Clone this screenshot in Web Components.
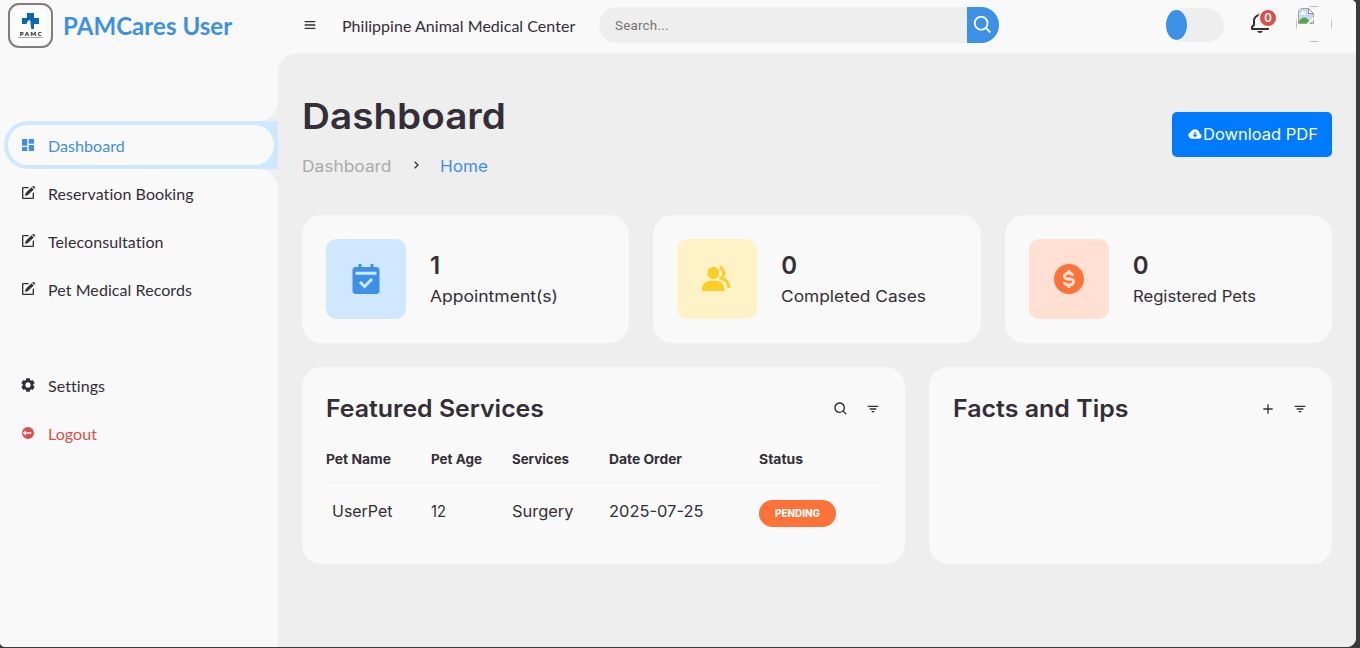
<!DOCTYPE html>
<html lang="en">
<head>
<meta charset="utf-8">
<title>PAMCares User</title>
<style>
:root{--light:#f9f9f9;--grey:#eee;--blue:#3c91e6;--light-blue:#cfe8ff;--dark:#342e37;--red:#db504a;--yellow:#ffce26;--light-yellow:#fff2c6;--orange:#fd7238;--light-orange:#ffe0d3;}
html,body{margin:0;height:100%;overflow:hidden;background:#3a3a3a;font-variant-ligatures:none;}
</style>
</head>
<body>
<pam-app></pam-app>
<script>
const ICONS={
dashboard:'<path d="M4 13h6a1 1 0 0 0 1-1V4a1 1 0 0 0-1-1H4a1 1 0 0 0-1 1v8a1 1 0 0 0 1 1zm-1 7a1 1 0 0 0 1 1h6a1 1 0 0 0 1-1v-4a1 1 0 0 0-1-1H4a1 1 0 0 0-1 1v4zm10 0a1 1 0 0 0 1 1h6a1 1 0 0 0 1-1v-7a1 1 0 0 0-1-1h-6a1 1 0 0 0-1 1v7zm1-10h6a1 1 0 0 0 1-1V4a1 1 0 0 0-1-1h-6a1 1 0 0 0-1 1v5a1 1 0 0 0 1 1z"/>',
edit:'<path d="m7.500 16.500 4-1L20.500 6.800 17.200 3.500 8.500 12zM18.300 2.500l3.200 3.200 1-1a1 1 0 0 0 0-1.400l-1.800-1.800a1 1 0 0 0-1.400 0z"/><path d="M5 21h14c1.103 0 2-.897 2-2v-8.668l-2 2V19H5V5h6.847l2-2H5c-1.103 0-2 .897-2 2v14c0 1.103.897 2 2 2z"/>',
cog:'<path d="m2.344 15.271 2 3.460a1 1 0 0 0 1.366.365l1.396-.806c.58.457 1.221.832 1.895 1.112V21a1 1 0 0 0 1 1h4a1 1 0 0 0 1-1v-1.598a8.094 8.094 0 0 0 1.895-1.112l1.396.806c.477.275 1.091.11 1.366-.365l2-3.460a1.004 1.004 0 0 0-.365-1.366l-1.372-.793a7.683 7.683 0 0 0-.002-2.224l1.372-.793c.476-.275.641-.89.365-1.366l-2-3.460a1 1 0 0 0-1.366-.365l-1.396.806A8.034 8.034 0 0 0 15 4.598V3a1 1 0 0 0-1-1h-4a1 1 0 0 0-1 1v1.598A8.094 8.094 0 0 0 7.105 5.710L5.710 4.904a.999.999 0 0 0-1.366.365l-2 3.460a1.004 1.004 0 0 0 .365 1.366l1.372.793a7.683 7.683 0 0 0 0 2.224l-1.372.793c-.476.275-.641.89-.365 1.366zM12 8c2.206 0 4 1.794 4 4s-1.794 4-4 4-4-1.794-4-4 1.794-4 4-4z"/>',
logout:'<path fill-rule="evenodd" d="M12 3a9 9 0 1 0 0 18 9 9 0 0 0 0-18zM9 8v3h8v2H9v3l-5-4z"/>',
menu:'<path d="M4 6h16v2H4zm0 5h16v2H4zm0 5h16v2H4z"/>',
search:'<path d="M10 18a7.952 7.952 0 0 0 4.897-1.688l4.396 4.396 1.414-1.414-4.396-4.396A7.952 7.952 0 0 0 18 10c0-4.411-3.589-8-8-8s-8 3.589-8 8 3.589 8 8 8zm0-14c3.309 0 6 2.691 6 6s-2.691 6-6 6-6-2.691-6-6 2.691-6 6-6z"/>',
filter:'<path d="M7 11h10v2H7zM4 7h16v2H4zm6 8h4v2h-4z"/>',
plus:'<path d="M19 11h-6V5h-2v6H5v2h6v6h2v-6h6z"/>',
chevron:'<path d="M10.707 17.707 16.414 12l-5.707-5.707-1.414 1.414L13.586 12l-4.293 4.293z"/>',
cloud:'<path d="M18.944 11.112C18.507 7.670 15.560 5 12 5 9.244 5 6.850 6.611 5.757 9.150 3.609 9.792 2 11.820 2 14c0 2.757 2.243 5 5 5h11c2.206 0 4-1.794 4-4a4.010 4.010 0 0 0-3.056-3.888zM12 17l-4-4h3V9h2v4h3z"/>',
bell:'<path d="M19 13.586V10c0-3.217-2.185-5.927-5.145-6.742C13.562 2.520 12.846 2 12 2s-1.562.52-1.855 1.258C7.185 4.074 5 6.783 5 10v3.586l-1.707 1.707A.996.996 0 0 0 3 16v2a1 1 0 0 0 1 1h16a1 1 0 0 0 1-1v-2a.996.996 0 0 0-.293-.707L19 13.586zM19 17H5v-.586l1.707-1.707A.996.996 0 0 0 7 14v-4c0-2.757 2.243-5 5-5s5 2.243 5 5v4c0 .266.105.52.293.707L19 16.414V17zm-7 5a2.980 2.980 0 0 0 2.818-2H9.182A2.980 2.980 0 0 0 12 22z"/>',
calendar:'<path fill-rule="evenodd" d="M21 20V6c0-1.103-.897-2-2-2h-2V2h-2v2H9V2H7v2H5c-1.103 0-2 .897-2 2v14c0 1.103.897 2 2 2h14c1.103 0 2-.897 2-2zM5 7.200h14v2H5zM11 18.400l-3.700-3.700 1.400-1.400 2.300 2.300 4.300-4.300 1.400 1.400z"/>',
group:'<path d="M9.500 12c2.206 0 4-1.794 4-4s-1.794-4-4-4-4 1.794-4 4 1.794 4 4 4zm1.500 1H8c-3.309 0-6 2.691-6 6v1h15v-1c0-3.309-2.691-6-6-6z"/><path d="M16.604 11.048a5.670 5.670 0 0 0 .751-3.440c-.179-1.784-1.175-3.361-2.803-4.440l-1.105 1.666c1.119.742 1.800 1.799 1.918 2.974a3.693 3.693 0 0 1-1.072 2.986l-1.192 1.192 1.618.475C18.951 13.701 19 17.957 19 18h2c0-1.789-.956-5.285-4.396-6.952z"/>',
dollar:'<path d="M12 2C6.486 2 2 6.486 2 12s4.486 10 10 10 10-4.486 10-10S17.514 2 12 2zm1 14.915V18h-2v-1.080c-2.339-.367-3-2.002-3-2.920h2c.011.143.159 1 2 1 1.380 0 2-.585 2-1 0-.324 0-1-2-1-3.480 0-4-1.880-4-3 0-1.288 1.029-2.584 3-2.915V6.012h2v1.109c1.734.41 2.400 1.853 2.400 2.879h-1l-1 .018C13.386 9.638 13.185 9 12 9c-1.299 0-2 .516-2 1 0 .374 0 1 2 1 3.480 0 4 1.880 4 3 0 1.288-1.029 2.584-3 2.915z"/>'
};
const define=(name,html,setup)=>customElements.define(name,class extends HTMLElement{
  constructor(){super();this.attachShadow({mode:'open'});}
  connectedCallback(){this.shadowRoot.innerHTML=typeof html==='function'?html(this):html;if(setup)setup(this);}
});

define('ui-icon',el=>`<style>:host{display:block;flex:none;width:${el.getAttribute('size')||16}px;height:${el.getAttribute('size')||16}px}svg{display:block;width:100%;height:100%;fill:currentColor}</style><svg viewBox="0 0 24 24">${ICONS[el.getAttribute('name')]}</svg>`);

/* Text widened so that it fills the given width */
define('ui-text',`<style>:host{display:block;flex:none;white-space:nowrap}span{display:inline-block;transform-origin:0 50%}</style><span><slot></slot></span>`,el=>{
  const w=+el.getAttribute('w');
  el.style.width=w+'px';
  const s=el.shadowRoot.querySelector('span');
  s.style.transform='scaleX('+(w/s.getBoundingClientRect().width).toFixed(4)+')';
});

define('nav-item',el=>`<style>
:host{display:block;position:relative;height:48px;padding:4px;margin-left:4px;box-sizing:border-box;border-radius:24px 0 0 24px;color:var(--dark)}
:host([active]){background:var(--light-blue);color:var(--blue)}
:host([danger]){color:var(--red)}
:host([active])::before,:host([active])::after{content:"";position:absolute;right:0;width:20px;height:20px}
:host([active])::before{top:-20px;background:radial-gradient(circle at 0 0,var(--light) 19.500px,var(--grey) 20.500px)}
:host([active])::after{bottom:-20px;background:radial-gradient(circle at 0 100%,var(--light) 19.500px,var(--grey) 20.500px)}
a{display:flex;align-items:center;height:40px;border-radius:20px;background:var(--light);padding-left:12px;gap:12px;font:16px/40px Lato,sans-serif}
span{padding-top:2px;letter-spacing:.07px}
</style><a><ui-icon name="${el.getAttribute('icon')}"></ui-icon><span><slot></slot></span></a>`);

define('pam-logo',`<style>:host{display:grid;place-items:center;box-sizing:border-box;width:45px;height:45px;border:2px solid #7e7e7e;border-radius:11px;flex:none}
div{width:31px;height:31px;background:#fff;border-radius:3px;display:flex;flex-direction:column;align-items:center}
svg{width:17px;height:17px;margin-top:3px;flex:none}b{font:900 6px/7px Lato,sans-serif;letter-spacing:1.500px;color:#111;padding-left:2px}i{width:25px;height:1px;background:#aaa}</style>
<div><svg viewBox="0 0 17 17"><path fill="#0a66b5" d="M5 0h7v5h5v6h-5v5H5v-5H0V5h5z"/><path fill="#fff" d="M4.500 11l1-2.500L7 7l1.500 1v3l.8 5H5z"/></svg><b>PAMC</b><i></i></div>`);

define('side-bar',`<style>:host{display:block;width:278px;flex:none;background:var(--light)}
header{display:flex;gap:10px;height:53px;box-sizing:border-box;padding:3px 0 0 8px}
h1{margin:0;font:700 24px/45px Lato,sans-serif;color:var(--blue);letter-spacing:.06px}
nav{padding-top:68px}nav+nav{padding-top:48px}</style>
<header><pam-logo></pam-logo><h1>PAMCares User</h1></header>
<nav><nav-item icon="dashboard" active>Dashboard</nav-item><nav-item icon="edit">Reservation Booking</nav-item><nav-item icon="edit">Teleconsultation</nav-item><nav-item icon="edit">Pet Medical Records</nav-item></nav>
<nav><nav-item icon="cog">Settings</nav-item><nav-item icon="logout" danger>Logout</nav-item></nav>`);

define('search-box',`<style>:host{display:flex;width:400px;height:36px;border-radius:18px;overflow:hidden;background:var(--grey)}
span{flex:1;padding-left:16px;font:13.333px/37px Roboto,sans-serif;color:#757575;letter-spacing:.25px}
button{width:32px;border:0;padding:0;background:var(--blue);color:#fff;display:grid;place-items:center}</style>
<span>Search...</span><button><ui-icon name="search" size="22"></ui-icon></button>`);

define('user-avatar',`<style>:host{display:block;position:relative;width:36px;height:36px}
div{height:36px;border-radius:50%;overflow:hidden}
i{display:block;box-sizing:border-box;height:36px;border:1px solid #b5b5b5}svg{position:absolute;left:2px;top:2px}</style>
<div><i></i></div><svg width="16" height="16" viewBox="0 0 16 16"><path d="M.5 15.500V3L3 .500h7.500l5 5v10z" fill="#c8dafa" stroke="#a3a3a3"/><path d="M10.500.500v5h5z" fill="#fff" stroke="#919191"/><path d="M3.500 4.500c0-2 3-2 3 0 2 0 2 2.500 0 2.500h-3C2 7 2 4.500 3.500 4.500z" fill="#fff"/><path d="M1 15v-1.500c3-5 7-5 10-1l3 2.500z" fill="#53a93f"/><path d="M9.500 16 16 10" stroke="#f9f9f9" stroke-width="2"/></svg>`);

define('top-bar',`<style>:host{display:flex;align-items:center;height:53px;box-sizing:border-box;padding:0 24px 3px 24px;background:var(--light);color:var(--dark)}
.name{font:16px/24px Lato,sans-serif;margin:2px 0 0 24px;width:233px;white-space:nowrap;letter-spacing:.03px}
search-box{margin-left:24px}
.toggle{margin-left:auto;width:58px;height:34px;border-radius:17px;background:var(--grey);display:flex;align-items:center}
.toggle i{width:21px;height:30px;border-radius:50%;background:var(--blue)}
.bell{position:relative;margin:-4px 24px 0}
.bell b{position:absolute;right:-6px;top:-3px;width:16px;height:16px;border:2px solid var(--light);border-radius:50%;background:var(--red);color:#fff;font:600 11.500px/17px Inter,sans-serif;text-align:center}
user-avatar{margin-top:-2px}</style>
<ui-icon name="menu"></ui-icon><div class="name">Philippine Animal Medical Center</div><search-box></search-box>
<div class="toggle"><i></i></div><div class="bell"><ui-icon name="bell" size="24"></ui-icon><b>0</b></div><user-avatar></user-avatar>`);

define('page-head',`<style>:host{display:flex;align-items:center;justify-content:space-between;height:90px;color:var(--dark);font:16px/26px Inter,sans-serif}
h1{margin:0 0 10px;font:600 36px/54px Inter,sans-serif}
nav{display:flex;align-items:center;gap:16px;color:#aaa}nav ui-icon{color:var(--dark);margin-top:-2px}.home{color:var(--blue)}
a{display:flex;align-items:center;width:160px;height:45px;box-sizing:border-box;padding-left:15px;border-radius:5px;background:#007bff;color:#fff}</style>
<div><h1><ui-text w="204">Dashboard</ui-text></h1><nav><ui-text w="89.500">Dashboard</ui-text><ui-icon name="chevron"></ui-icon><ui-text class="home" w="48">Home</ui-text></nav></div>
<a><ui-icon name="cloud"></ui-icon><ui-text w="115">Download PDF</ui-text></a>`);

define('stat-card',el=>`<style>:host{display:flex;align-items:center;gap:24px;height:128px;box-sizing:border-box;padding:24px;border-radius:20px;background:var(--light);color:var(--dark);font:16px/24px Inter,sans-serif}
.i{width:80px;height:80px;border-radius:10px;display:grid;place-items:center;background:var(--light-${el.getAttribute('tone')});color:var(--${el.getAttribute('tone')})}
.t{padding-bottom:2px}
h3{margin:0;font:600 24px/36px Inter,sans-serif}</style>
<div class="i"><ui-icon name="${el.getAttribute('icon')}" size="36"></ui-icon></div><div class="t"><h3>${el.getAttribute('value')}</h3><ui-text w="${el.getAttribute('w')}">${el.getAttribute('label')}</ui-text></div>`);

define('ui-panel',el=>`<style>:host{display:block;height:197px;box-sizing:border-box;padding:24px;border-radius:20px;background:var(--light);color:var(--dark)}
header{display:flex;align-items:center;gap:16.500px;height:36px}
h3{margin:0 auto 0 0;font:600 24px/36px Inter,sans-serif}</style>
<header><h3><ui-text w="${el.getAttribute('w')}">${el.getAttribute('heading')}</ui-text></h3><ui-icon name="${el.getAttribute('action')}"></ui-icon><ui-icon name="filter"></ui-icon></header><slot></slot>`);

define('service-table',`<style>:host{display:block;padding-top:20px;font:16px/24px Inter,sans-serif}
.r{display:grid;grid-template-columns:105px 80.500px 97.500px 150px 1fr;align-items:center}
.h{height:33px;padding-top:2px;border-bottom:1px solid var(--grey);font:700 13px/20px Inter,sans-serif;align-items:start}
.d{height:55px}.n{padding-left:6px}
.p{width:77px;height:27px;margin-top:5px;border-radius:20px;background:var(--orange);color:var(--light);font:800 10px/27px Inter,sans-serif;display:flex;justify-content:center}</style>
<div class="r h"><ui-text w="65">Pet Name</ui-text><ui-text w="51">Pet Age</ui-text><ui-text w="57">Services</ui-text><ui-text w="73">Date Order</ui-text><ui-text w="44">Status</ui-text></div>
<div class="r d"><div class="n"><ui-text w="60.500">UserPet</ui-text></div><ui-text w="15">12</ui-text><ui-text w="61.500">Surgery</ui-text><ui-text w="94.500">2025-07-25</ui-text><div class="p"><ui-text w="45">PENDING</ui-text></div></div>`);

define('pam-app',`<style>:host{display:flex;width:1356px;height:647px;overflow:hidden;background:var(--light);border-radius:0 5px 9px 5px}
.c{flex:1;min-width:0;display:flex;flex-direction:column}
main{flex:1;background:var(--grey);border-top-left-radius:20px;padding:36px 24px}
.g{display:grid;gap:24px}.s{grid-template-columns:repeat(3,1fr);margin:36px 0 24px}.p{grid-template-columns:603px 1fr}</style>
<side-bar></side-bar><div class="c"><top-bar></top-bar><main><page-head></page-head>
<div class="g s"><stat-card tone="blue" icon="calendar" value="1" label="Appointment(s)" w="128"></stat-card><stat-card tone="yellow" icon="group" value="0" label="Completed Cases" w="145"></stat-card><stat-card tone="orange" icon="dollar" value="0" label="Registered Pets" w="123"></stat-card></div>
<div class="g p"><ui-panel heading="Featured Services" w="218" action="search"><service-table></service-table></ui-panel><ui-panel heading="Facts and Tips" w="175.500" action="plus"></ui-panel></div></main></div>`);
</script>
</body>
</html>
